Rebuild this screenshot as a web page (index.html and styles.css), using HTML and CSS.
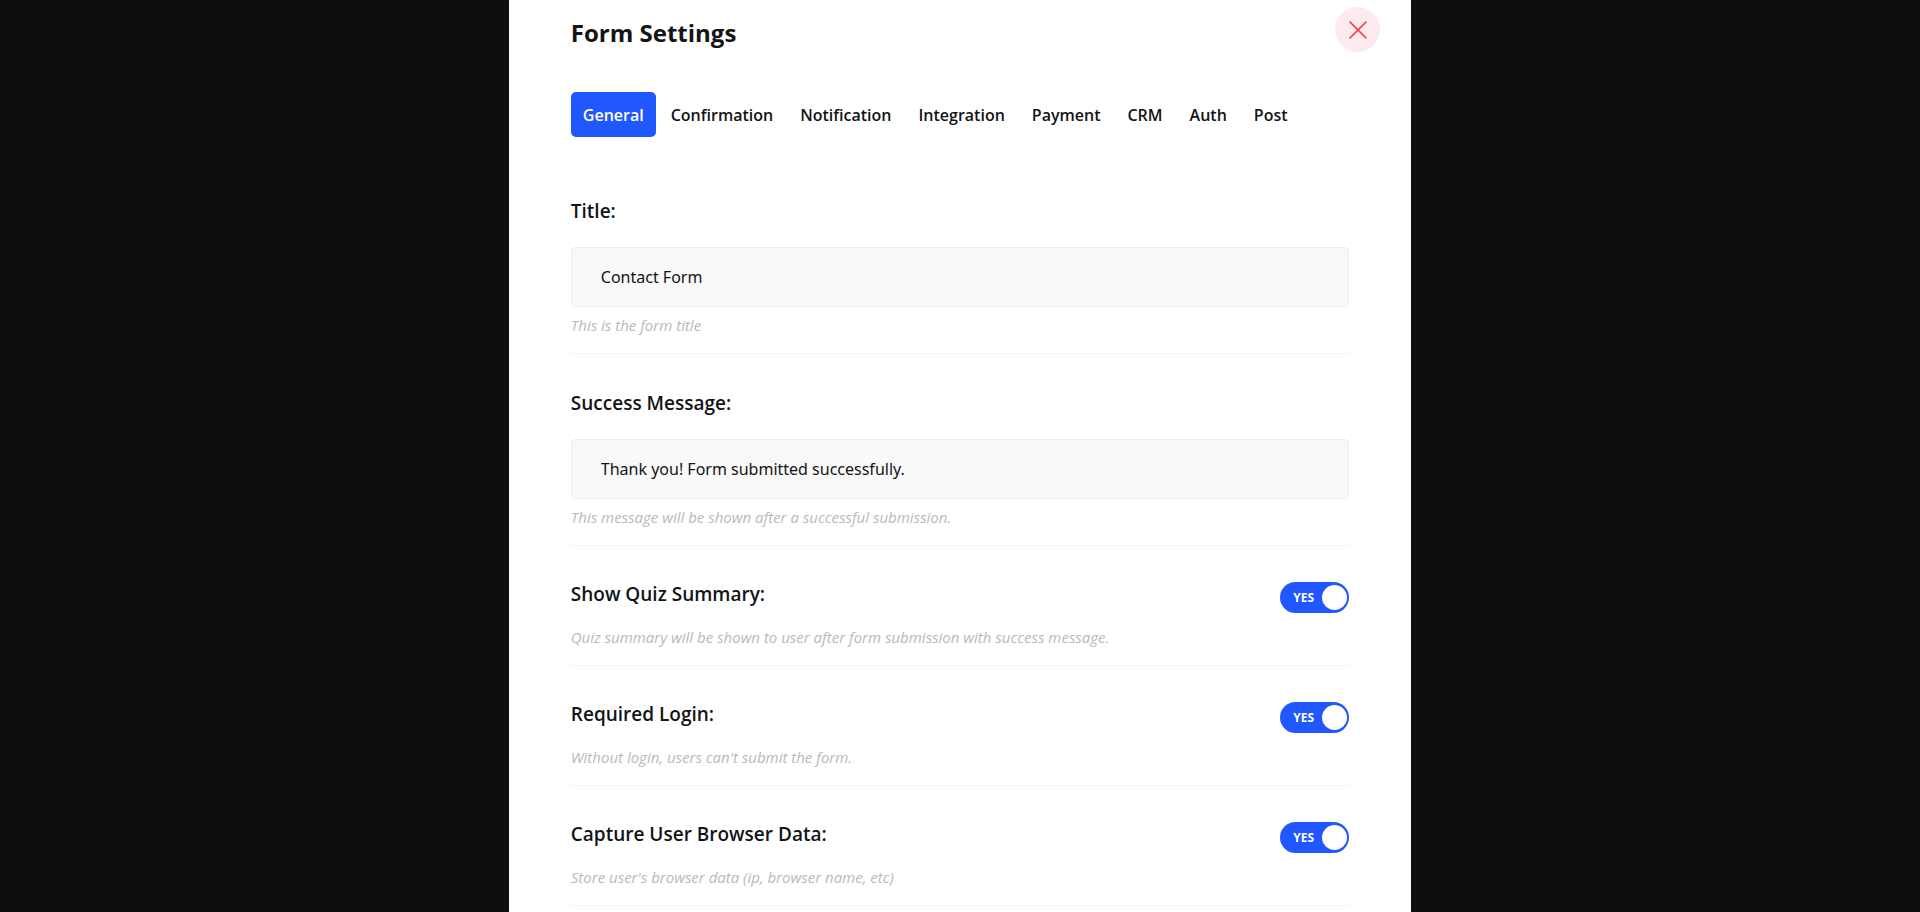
FILE: index.html
```
<!DOCTYPE html>
<html lang="en">
<head>
    <meta charset="UTF-8">
    <meta name="viewport" content="width=device-width, initial-scale=1.0">
    <title>Form Settings</title>
    <link rel="stylesheet" href="styles.css">
</head>
<body>
    <div class="modal">
        <button type="button" class="close-btn" aria-label="Close">
            <svg width="18" height="18" viewBox="0 0 18 18" fill="none" stroke="#f0434f" stroke-width="1.5">
                <path d="M0.6 0.6L17.4 17.4M17.4 0.6L0.6 17.4"/>
            </svg>
        </button>

        <h1>Form Settings</h1>

        <div class="tabs">
            <button type="button" class="tab active">General</button>
            <button type="button" class="tab">Confirmation</button>
            <button type="button" class="tab">Notification</button>
            <button type="button" class="tab">Integration</button>
            <button type="button" class="tab">Payment</button>
            <button type="button" class="tab">CRM</button>
            <button type="button" class="tab">Auth</button>
            <button type="button" class="tab">Post</button>
        </div>

        <form class="settings">
            <div class="setting">
                <label class="setting-label" for="title">Title:</label>
                <input type="text" class="setting-input" id="title" name="title" value="Contact Form">
                <p class="help">This is the form title</p>
            </div>

            <div class="setting">
                <label class="setting-label" for="success">Success Message:</label>
                <input type="text" class="setting-input" id="success" name="success" value="Thank you! Form submitted successfully.">
                <p class="help">This message will be shown after a successful submission.</p>
            </div>

            <div class="setting setting-toggle">
                <div>
                    <label class="setting-label" for="quiz">Show Quiz Summary:</label>
                    <p class="help">Quiz summary will be shown to user after form submission with success message.</p>
                </div>
                <div class="switch">
                    <input type="checkbox" id="quiz" name="quiz" checked>
                    <span class="switch-text">YES</span>
                </div>
            </div>

            <div class="setting setting-toggle">
                <div>
                    <label class="setting-label" for="login">Required Login:</label>
                    <p class="help">Without login, users can't submit the form.</p>
                </div>
                <div class="switch">
                    <input type="checkbox" id="login" name="login" checked>
                    <span class="switch-text">YES</span>
                </div>
            </div>

            <div class="setting setting-toggle">
                <div>
                    <label class="setting-label" for="browser">Capture User Browser Data:</label>
                    <p class="help">Store user's browser data (ip, browser name, etc)</p>
                </div>
                <div class="switch">
                    <input type="checkbox" id="browser" name="browser" checked>
                    <span class="switch-text">YES</span>
                </div>
            </div>
        </form>
    </div>
</body>
</html>
```
FILE: styles.css
```
* {
    box-sizing: border-box;
}

body {
    margin: 0;
    background: #0d0d0d;
    color: #121416;
    font-family: "Segoe UI", "Open Sans", "Noto Sans", sans-serif;
}

.modal {
    position: relative;
    width: 47%;
    min-height: 100vh;
    margin: 0 auto;
    padding: 16px 62px 0;
    background: #fff;
}

.modal h1 {
    margin: 0;
    font-size: 24px;
    line-height: 34px;
    font-weight: 700;
}

/* sits over the corner of the modal */
.close-btn {
    position: absolute;
    top: 7px;
    right: 31px;
    display: flex;
    align-items: center;
    justify-content: center;
    width: 45px;
    height: 45px;
    padding: 0;
    border: none;
    border-radius: 50%;
    background: #fceaec;
    cursor: pointer;
}

/* Tabs */
.tabs {
    display: flex;
    flex-wrap: wrap;
    gap: 3px;
    margin: 42px 0 25px;
}

.tab {
    height: 45px;
    padding: 1px 12px 0;
    border: none;
    border-radius: 5px;
    background: transparent;
    color: #121416;
    font-family: inherit;
    font-size: 16px;
    font-weight: 600;
    cursor: pointer;
}

.tab.active {
    background: #2057ff;
    color: #fff;
}

/* Settings rows */
.setting {
    padding: 33px 0 18px;
    border-bottom: 1px solid #f2f2f2;
}

.setting-label {
    display: block;
    width: fit-content;
    font-size: 19px;
    line-height: 32px;
    font-weight: 600;
}

.setting-input {
    display: block;
    width: 100%;
    height: 60px;
    margin: 20px 0 8px;
    padding: 0 29px;
    border: 1px solid #ececec;
    border-radius: 5px;
    background: #f9f9f9;
    color: #121416;
    font-family: "Segoe UI", "Noto Sans", sans-serif;
    font-size: 16px;
}

.help {
    margin: 0;
    color: #b9b9b9;
    font-size: 15px;
    line-height: 20px;
    font-style: italic;
}

.setting-toggle {
    display: flex;
    align-items: flex-start;
    justify-content: space-between;
    padding-top: 32px;
}

.setting-toggle .help {
    margin-top: 17px;
}

/* Yes / no switch */
.switch {
    position: relative;
    margin-top: 4px;
}

.switch input {
    display: flex;
    align-items: center;
    justify-content: flex-start;
    appearance: none;
    width: 69px;
    height: 31px;
    margin: 0;
    padding: 0 2px;
    border-radius: 16px;
    background: #b9b9b9;
    cursor: pointer;
}

.switch input::before {
    content: "";
    width: 25px;
    height: 25px;
    border-radius: 50%;
    background: #fff;
}

.switch input:checked {
    justify-content: flex-end;
    background: #2057ff;
}

.switch-text {
    position: absolute;
    top: 0;
    left: 13px;
    color: #fff;
    font-size: 12px;
    line-height: 31px;
    font-weight: 700;
    pointer-events: none;
}
```
